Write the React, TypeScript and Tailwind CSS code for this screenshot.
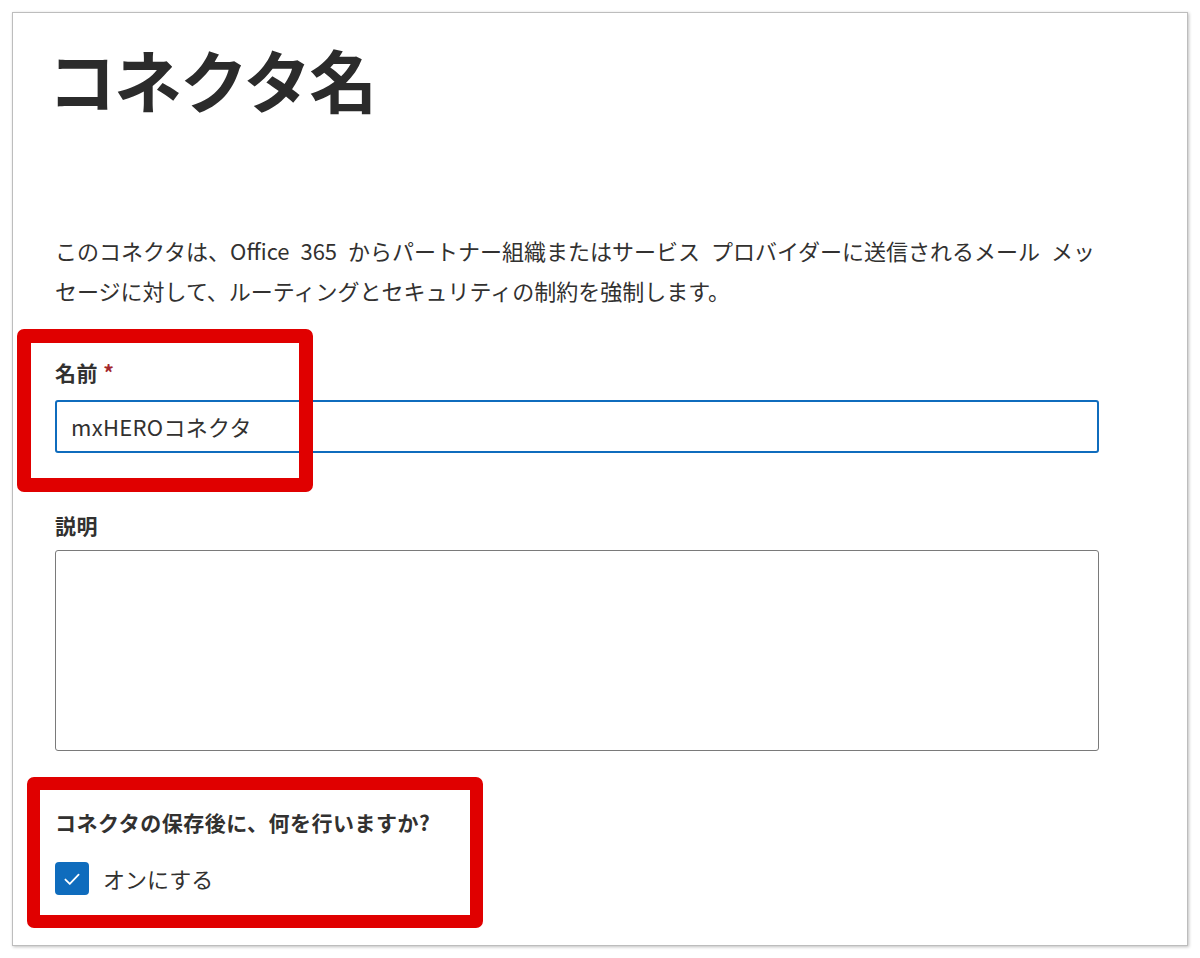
import React from "react";

const jp = { fontFamily: '"Noto Sans CJK JP", "Noto Sans", sans-serif' };

export default function App() {
  return (
    <div className="relative w-[1200px] h-[958px] bg-white" style={jp}>
      <div className="absolute left-[12px] top-[12px] w-[1176px] h-[934px] border border-[#bdbdbd] bg-white shadow-[1px_1px_3px_rgba(0,0,0,0.25)]">
        <div className="pl-[42px] pr-[88px] pt-[26px] text-[#323130]">
          <h1 className="-ml-[7px] text-[68px] leading-[80px] font-bold text-[#2b2b2b] tracking-[-2px]">コネクタ名</h1>
          <p className="mt-[111px] text-[22px] leading-[40px] whitespace-nowrap [word-spacing:6px]">
            このコネクタは、Office 365 からパートナー組織またはサービス プロバイダーに送信されるメール メッ
            <br />
            セージに対して、ルーティングとセキュリティの制約を強制します。
          </p>
          <div className="mt-[48px] text-[21px] leading-[28px] font-bold tracking-[0.5px]">
            名前 <span className="text-[#a4262c]">*</span>
          </div>
          <div className="mt-[14px] h-[53px] border-2 border-[#0f6cbd] rounded-[3px] flex items-center pl-[14px] text-[22px] tracking-[0.3px]">
            mxHEROコネクタ
          </div>
          <div className="mt-[58px] text-[21px] leading-[28px] font-bold tracking-[0.5px]">説明</div>
          <div className="mt-[11px] h-[201px] border border-[#7a7a7a] rounded-[3px]" />
          <div className="mt-[57px] text-[21px] leading-[28px] font-bold tracking-[0.5px]">コネクタの保存後に、何を行いますか?</div>
          <div className="mt-[26px] flex items-center gap-[14px]">
            <div className="w-[34px] h-[33px] rounded-[4px] bg-[#0f6cbd] flex items-center justify-center">
              <svg width="22" height="22" viewBox="0 0 20 20" fill="none">
                <path d="M4 10.5 L8 14.5 L16 6" stroke="white" strokeWidth="1.6" strokeLinecap="round" strokeLinejoin="round" />
              </svg>
            </div>
            <span className="text-[22px] text-[#323130]">オンにする</span>
          </div>
        </div>
      </div>
      <div className="absolute left-[17px] top-[329px] w-[296px] h-[163px] border-[14px] border-[#e00000] rounded-[7px]" />
      <div className="absolute left-[27px] top-[777px] w-[456px] h-[151px] border-[13px] border-[#e00000] rounded-[7px]" />
    </div>
  );
}
